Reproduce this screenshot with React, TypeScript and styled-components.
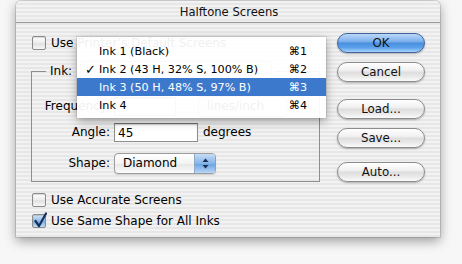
import React from "react";
import styled, { createGlobalStyle, css } from "styled-components";

const Global = createGlobalStyle`
  html, body { margin: 0; padding: 0; }
  body {
    background: #f7f7f7;
    font-family: "DejaVu Sans", "Liberation Sans", sans-serif;
    font-size: 12px;
    color: #000;
    width: 462px;
    height: 264px;
    overflow: hidden;
  }
`;

const stripes = css`
  background: repeating-linear-gradient(
    to bottom,
    #f2f2f2 0px,
    #f2f2f2 2px,
    #e7e7e7 2px,
    #e7e7e7 4px
  );
`;

const Page = styled.div`
  padding: 1px 0 0 16px;
`;

const Window = styled.div`
  position: relative;
  width: 424px;
  height: 236px;
  ${stripes};
  border-radius: 5px 5px 0 0;
  box-shadow: 0 4px 12px rgba(0, 0, 0, 0.38), 0 0 0 1px rgba(0, 0, 0, 0.12);
  display: flex;
  flex-direction: column;
`;

const TitleBar = styled.div`
  height: 21px;
  border-bottom: 1px solid #9a9a9a;
  display: flex;
  align-items: center;
  justify-content: center;
  font-size: 11.6px;
  color: #111;
  padding-left: 2px;
`;

const Body = styled.div`
  display: flex;
  padding: 10px 15px 0 15px;
  gap: 17px;
`;

const LeftCol = styled.div`
  width: 289px;
  display: flex;
  flex-direction: column;
`;

const RightCol = styled.div`
  width: 88px;
  display: flex;
  flex-direction: column;
`;

const CheckRow = styled.label<{ $mt?: number }>`
  display: flex;
  align-items: center;
  gap: 5px;
  height: 14px;
  padding-left: 1px;
  margin-top: ${(p) => p.$mt ?? 0}px;
`;

const Box = styled.span<{ $checked?: boolean }>`
  width: 12px;
  height: 12px;
  border: 1px solid #8b8b8b;
  border-radius: 2px;
  position: relative;
  flex-shrink: 0;
  background: ${(p) =>
    p.$checked
      ? "linear-gradient(#d6e7f8, #8fb9e6 50%, #7eaee3 55%, #c3dcf5)"
      : "linear-gradient(#ffffff, #ececec 50%, #e0e0e0 55%, #f7f7f7)"};
  box-shadow: inset 0 1px 1px rgba(0, 0, 0, 0.15);
`;

const CheckMark = styled.svg`
  position: absolute;
  left: 0px;
  top: -3px;
`;

const Group = styled.fieldset`
  margin: 11px 0 0 0;
  padding: 15px 0 8px 0;
  border: 1px solid #8e8e8e;
  min-width: 0;
`;

const Legend = styled.legend`
  margin-left: 14px;
  padding: 0 4px;
  display: flex;
  align-items: center;
  gap: 8px;
  height: 20px;
`;

const PopupInk = styled.div`
  width: 190px;
  height: 18px;
  border: 1px solid #a5a5a5;
  border-radius: 4px;
  background: linear-gradient(#ffffff, #f0f0f0);
`;

const FormRow = styled.div<{ $mt?: number }>`
  display: flex;
  align-items: center;
  gap: 4px;
  height: 20px;
  margin-top: ${(p) => p.$mt ?? 0}px;
`;

const Label = styled.span`
  width: 78px;
  flex-shrink: 0;
  text-align: right;
  white-space: nowrap;
`;

const Field = styled.div<{ $w: number }>`
  width: ${(p) => p.$w}px;
  height: 19px;
  box-sizing: border-box;
  border: 1px solid #8d8d8d;
  border-top-color: #6f6f6f;
  background: #fff;
  box-shadow: inset 0 1px 1px rgba(0, 0, 0, 0.18);
  padding: 2px 3px;
  line-height: 14px;
`;

const Unit = styled.span`
  margin-left: 1px;
`;

const Popup = styled.div<{ $w: number; $ml?: number }>`
  width: ${(p) => p.$w}px;
  height: 21px;
  box-sizing: border-box;
  border: 1px solid #9d9d9d;
  border-radius: 4px;
  background: linear-gradient(#ffffff, #f3f3f3 50%, #e8e8e8 55%, #fbfbfb);
  box-shadow: 0 1px 1px rgba(0, 0, 0, 0.15);
  display: flex;
  align-items: center;
  overflow: hidden;
  margin-left: ${(p) => p.$ml ?? 0}px;
`;

const PopupText = styled.span`
  flex: 1;
  padding-left: 8px;
`;

const PopupArrows = styled.span`
  width: 20px;
  height: 100%;
  background: linear-gradient(#c6ddf6, #86b5e8 50%, #6fa6e4 55%, #b8d6f7);
  border-left: 1px solid #8ea9cc;
  display: flex;
  align-items: center;
  justify-content: center;
`;

const Button = styled.div<{ $primary?: boolean; $mt?: number }>`
  height: 20px;
  box-sizing: border-box;
  border-radius: 10px;
  margin-top: ${(p) => p.$mt ?? 0}px;
  display: flex;
  align-items: center;
  justify-content: center;
  font-size: 11.8px;
  color: #111;
  border: 1px solid ${(p) => (p.$primary ? "#40649a" : "#8c8c8c")};
  background: ${(p) =>
    p.$primary
      ? "linear-gradient(#bcd8f7 0%, #7fb2ec 40%, #4b8fe0 52%, #5aa0ea 75%, #a8d4fb 100%)"
      : "linear-gradient(#ffffff 0%, #f1f1f1 40%, #dedede 52%, #e9e9e9 75%, #fbfbfb 100%)"};
  box-shadow: 0 1px 2px rgba(0, 0, 0, 0.28);
`;

const Menu = styled.div`
  position: absolute;
  left: 61px;
  top: 36px;
  width: 249px;
  padding: 5px 0 4px 0;
  background: rgba(255, 255, 255, 0.94);
  box-shadow: 0 3px 9px rgba(0, 0, 0, 0.35), 0 0 0 1px rgba(0, 0, 0, 0.08);
  z-index: 2;
`;

const MenuItem = styled.div<{ $active?: boolean }>`
  height: 18px;
  display: grid;
  grid-template-columns: 22px 1fr auto;
  align-items: center;
  padding-right: 19px;
  font-size: 11.2px;
  color: ${(p) => (p.$active ? "#fff" : "#000")};
  background: ${(p) => (p.$active ? "#3c79cc" : "transparent")};
`;

const Tick = styled.span`
  text-align: right;
  padding-right: 3px;
  font-size: 13px;
  line-height: 1;
`;

const items = [
  { label: "Ink 1 (Black)", key: "⌘1" },
  { label: "Ink 2 (43 H, 32% S, 100% B)", key: "⌘2", checked: true },
  { label: "Ink 3 (50 H, 48% S, 97% B)", key: "⌘3", active: true },
  { label: "Ink 4", key: "⌘4" },
];

const Check = () => (
  <CheckMark width="15" height="16" viewBox="0 0 15 16">
    <path
      d="M2.5 9 L6 14 L13 1.5"
      fill="none"
      stroke="#15305e"
      strokeWidth="2.2"
      strokeLinecap="round"
      strokeLinejoin="round"
    />
  </CheckMark>
);

export default function App() {
  return (
    <>
      <Global />
      <Page>
        <Window>
          <TitleBar>Halftone Screens</TitleBar>
          <Body>
            <LeftCol>
              <CheckRow $mt={3}>
                <Box />
                Use Printer’s Default Screens
              </CheckRow>
              <Group>
                <Legend>
                  Ink:
                  <PopupInk />
                </Legend>
                <FormRow>
                  <Label>Frequency:</Label>
                  <Field $w={62} />
                  <Popup $w={89} $ml={18}>
                    <PopupText>lines/inch</PopupText>
                  </Popup>
                </FormRow>
                <FormRow $mt={6}>
                  <Label>Angle:</Label>
                  <Field $w={84}>45</Field>
                  <Unit>degrees</Unit>
                </FormRow>
                <FormRow $mt={11}>
                  <Label>Shape:</Label>
                  <Popup $w={102}>
                    <PopupText>Diamond</PopupText>
                    <PopupArrows>
                      <svg width="7" height="11" viewBox="0 0 7 11">
                        <path d="M3.5 0.5 L6.5 4 L0.5 4 Z" fill="#1b2f55" />
                        <path d="M3.5 10.5 L6.5 7 L0.5 7 Z" fill="#1b2f55" />
                      </svg>
                    </PopupArrows>
                  </Popup>
                </FormRow>
              </Group>
              <CheckRow $mt={11}>
                <Box />
                Use Accurate Screens
              </CheckRow>
              <CheckRow $mt={7}>
                <Box $checked>
                  <Check />
                </Box>
                Use Same Shape for All Inks
              </CheckRow>
            </LeftCol>
            <RightCol>
              <Button $primary>OK</Button>
              <Button $mt={9}>Cancel</Button>
              <Button $mt={17}>Load...</Button>
              <Button $mt={9}>Save...</Button>
              <Button $mt={14}>Auto...</Button>
            </RightCol>
          </Body>
          <Menu>
            {items.map((it) => (
              <MenuItem key={it.key} $active={it.active}>
                <Tick>{it.checked ? "✓" : ""}</Tick>
                <span>{it.label}</span>
                <span>{it.key}</span>
              </MenuItem>
            ))}
          </Menu>
        </Window>
      </Page>
    </>
  );
}
